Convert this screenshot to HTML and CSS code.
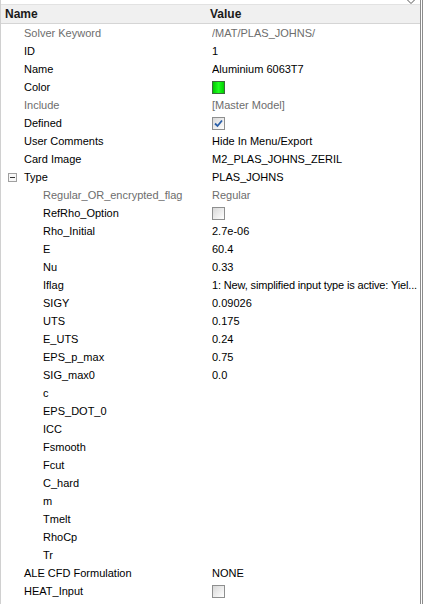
FILE: index.html
```html
<!DOCTYPE html>
<html>
<head>
<meta charset="utf-8">
<link rel="stylesheet" href="styles.css">
</head>
<body>
<div class="frame">
  <div class="panel">
    <div class="topstrip"><svg class="chev" width="8" height="4" viewBox="0 0 8 4"><path d="M0.5 0 L4 3.5 L7.5 0" fill="none" stroke="#555" stroke-width="1"/></svg></div>
    <div class="header">
      <div class="hname">Name</div>
      <div class="hval">Value</div>
    </div>
    <div class="rows">
      <div class="row"><div class="n l1 dim">Solver Keyword</div><div class="v dim">/MAT/PLAS_JOHNS/</div></div>
      <div class="row"><div class="n l1">ID</div><div class="v">1</div></div>
      <div class="row"><div class="n l1">Name</div><div class="v">Aluminium 6063T7</div></div>
      <div class="row"><div class="n l1">Color</div><div class="v"><span class="swatch"></span></div></div>
      <div class="row"><div class="n l1 dim">Include</div><div class="v dim">[Master Model]</div></div>
      <div class="row"><div class="n l1">Defined</div><div class="v"><span class="cb"><svg width="11" height="11" viewBox="0 0 11 11"><path d="M2 5.5 L4.5 8 L9 2.5" fill="none" stroke="#2a5fa8" stroke-width="1.8"/></svg></span></div></div>
      <div class="row"><div class="n l1">User Comments</div><div class="v">Hide In Menu/Export</div></div>
      <div class="row"><div class="n l1">Card Image</div><div class="v">M2_PLAS_JOHNS_ZERIL</div></div>
      <div class="row"><div class="n l0"><span class="tog"><span class="minus"></span></span>Type</div><div class="v">PLAS_JOHNS</div></div>
      <div class="row"><div class="n l2 dim">Regular_OR_encrypted_flag</div><div class="v dim">Regular</div></div>
      <div class="row"><div class="n l2">RefRho_Option</div><div class="v"><span class="cb"></span></div></div>
      <div class="row"><div class="n l2">Rho_Initial</div><div class="v">2.7e-06</div></div>
      <div class="row"><div class="n l2">E</div><div class="v">60.4</div></div>
      <div class="row"><div class="n l2">Nu</div><div class="v">0.33</div></div>
      <div class="row"><div class="n l2">Iflag</div><div class="v tight">1: New, simplified input type is active: Yiel...</div></div>
      <div class="row"><div class="n l2">SIGY</div><div class="v">0.09026</div></div>
      <div class="row"><div class="n l2">UTS</div><div class="v">0.175</div></div>
      <div class="row"><div class="n l2">E_UTS</div><div class="v">0.24</div></div>
      <div class="row"><div class="n l2">EPS_p_max</div><div class="v">0.75</div></div>
      <div class="row"><div class="n l2">SIG_max0</div><div class="v">0.0</div></div>
      <div class="row"><div class="n l2">c</div><div class="v"></div></div>
      <div class="row"><div class="n l2">EPS_DOT_0</div><div class="v"></div></div>
      <div class="row"><div class="n l2">ICC</div><div class="v"></div></div>
      <div class="row"><div class="n l2">Fsmooth</div><div class="v"></div></div>
      <div class="row"><div class="n l2">Fcut</div><div class="v"></div></div>
      <div class="row"><div class="n l2">C_hard</div><div class="v"></div></div>
      <div class="row"><div class="n l2">m</div><div class="v"></div></div>
      <div class="row"><div class="n l2">Tmelt</div><div class="v"></div></div>
      <div class="row"><div class="n l2">RhoCp</div><div class="v"></div></div>
      <div class="row"><div class="n l2">Tr</div><div class="v"></div></div>
      <div class="row"><div class="n l1">ALE CFD Formulation</div><div class="v">NONE</div></div>
      <div class="row"><div class="n l1">HEAT_Input</div><div class="v"><span class="cb"></span></div></div>
    </div>
  </div>
  <div class="edge"></div>
</div>
</body>
</html>
```
FILE: styles.css
```css
html, body {
  margin: 0;
  padding: 0;
  background: #ffffff;
}
body {
  font-family: "Liberation Sans", Arial, sans-serif;
  font-size: 11px;
  color: #000000;
  overflow: hidden;
}
.frame {
  display: flex;
  height: 604px;
}
.panel {
  border-left: 1px solid #d0d0d0;
  border-right: 1px solid #8c8c8c;
  box-sizing: border-box;
  width: 421px;
  display: flex;
  flex-direction: column;
}
.edge {
  width: 1px;
  margin-left: 1px;
  background: #8c8c8c;
}
.topstrip {
  height: 4px;
  position: relative;
}
.chev {
  position: absolute;
  right: 5px;
  top: 0;
}
.header {
  background: #f0f0f0;
  border-top: 1px solid #e2e2e2;
  border-bottom: 1px solid #d5d5d5;
  box-sizing: border-box;
  height: 20px;
  display: grid;
  grid-template-columns: 205px 1fr;
  align-items: center;
  font-size: 12px;
  font-weight: bold;
  color: #1a1a1a;
}
.hname {
  padding-left: 4px;
}
.hval {
  padding-left: 4px;
}
.rows {
  display: flex;
  flex-direction: column;
}
.row {
  height: 18px;
  display: grid;
  grid-template-columns: 211px 1fr;
  align-items: center;
  white-space: nowrap;
}
.n {
  display: flex;
  align-items: center;
}
.l0 { padding-left: 7px; }
.l1 { padding-left: 23px; }
.l2 { padding-left: 42px; }
.v {
  overflow: hidden;
  display: flex;
  align-items: center;
}
.tight {
  letter-spacing: -0.15px;
}
.dim { color: #6d6d6d; }
.swatch {
  width: 11px;
  height: 11px;
  border: 1px solid #3c6a3c;
  background: linear-gradient(to right, #00c800, #20ff20 50%, #00d000);
}
.cb {
  width: 11px;
  height: 11px;
  border: 1px solid #8e8f8f;
  background: linear-gradient(135deg, #d8d8d8, #ffffff);
  display: flex;
  align-items: center;
  justify-content: center;
}
.tog {
  width: 9px;
  height: 9px;
  border: 1px solid #a0a0a0;
  box-sizing: border-box;
  margin-right: 7px;
  display: flex;
  align-items: center;
  justify-content: center;
  background: #f7f7f7;
}
.minus {
  width: 5px;
  height: 1px;
  background: #333;
}
```
